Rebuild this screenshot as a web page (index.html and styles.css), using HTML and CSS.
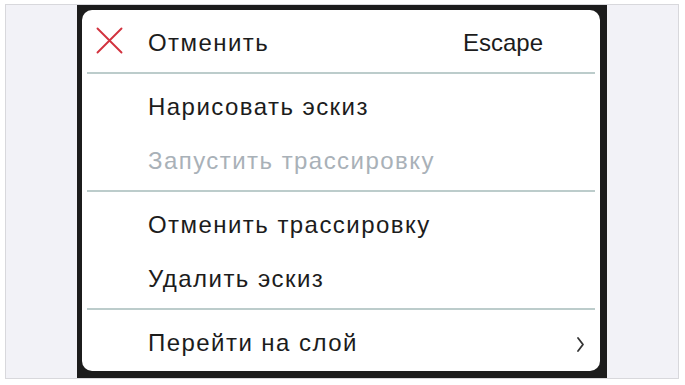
FILE: index.html
```html
<!DOCTYPE html>
<html lang="ru">
<head>
<meta charset="utf-8">
<link rel="stylesheet" href="styles.css">
</head>
<body>
<div class="stage">
  <div class="panel">
    <div class="menu">
      <div class="item">
        <span class="icon">
          <svg width="27" height="27" viewBox="0 0 27 27"><path d="M1.5 1.5 L25.5 25.5 M25.5 1.5 L1.5 25.5" stroke="#d2323e" stroke-width="1.9" fill="none" stroke-linecap="round"/></svg>
        </span>
        <span class="label">Отменить</span>
        <span class="shortcut">Escape</span>
      </div>
      <div class="sep"></div>
      <div class="item"><span class="icon"></span><span class="label">Нарисовать эскиз</span></div>
      <div class="item disabled"><span class="icon"></span><span class="label">Запустить трассировку</span></div>
      <div class="sep"></div>
      <div class="item"><span class="icon"></span><span class="label">Отменить трассировку</span></div>
      <div class="item"><span class="icon"></span><span class="label">Удалить эскиз</span></div>
      <div class="sep"></div>
      <div class="item">
        <span class="icon"></span><span class="label">Перейти на слой</span>
        <span class="chevron">
          <svg width="11" height="18" viewBox="0 0 11 18"><path d="M3 3 L8 9.5 L3 16" stroke="#333" stroke-width="1.8" fill="none" stroke-linecap="round" stroke-linejoin="round"/></svg>
        </span>
      </div>
    </div>
  </div>
</div>
</body>
</html>
```
FILE: styles.css
```css
html, body {
  margin: 0;
  padding: 0;
  background: #ffffff;
}
body {
  width: 685px;
  height: 385px;
  overflow: hidden;
  font-family: "Liberation Sans", Arial, sans-serif;
}
.stage {
  margin: 4px 0 0 5px;
  width: 672px;
  height: 373px;
  border: 1.5px solid #d8d8dc;
  border-top-width: 1px;
  background: #f2f2f7;
  display: flex;
  justify-content: center;
}
.panel {
  width: 518px;
  background: #1c1c1c;
  padding: 5px 7px 7px 5px;
  display: flex;
}
.menu {
  flex: 1;
  background: #ffffff;
  border-radius: 10px;
  padding: 6px 5px 0 5px;
  display: flex;
  flex-direction: column;
}
.item {
  height: 54.5px;
  flex: none;
  display: flex;
  align-items: center;
  padding: 0 9px;
  font-size: 24px;
  color: #1c1c1c;
}
.item.disabled {
  color: #a9b1b8;
}
.icon {
  width: 52px;
  display: flex;
  align-items: center;
  margin-bottom: 6px;
}
.label {
  flex: 1;
  letter-spacing: 1.45px;
}
.shortcut {
  margin-right: 43px;
}
.chevron {
  display: flex;
  margin-top: 3px;
}
.sep {
  height: 2px;
  flex: none;
  background: #bccccb;
  margin: 1px 0 6px;
}
```
